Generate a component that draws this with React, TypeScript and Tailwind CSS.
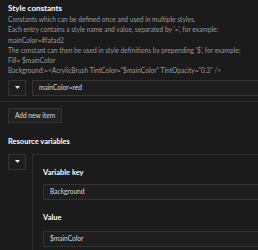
import React from 'react';

const Caret = () => (
  <svg width="5" height="3" viewBox="0 0 5 3" className="fill-gray-200">
    <path d="M0 0h5L2.5 3z" />
  </svg>
);

const ExpandBox = () => (
  <div className="flex h-[16px] w-[18px] shrink-0 items-center justify-center border border-[#333] bg-[#1e1e1e]">
    <Caret />
  </div>
);

export default function App() {
  const lines = [
    'Constants which can be defined once and used in multiple styles.',
    "Each entry contains a style name and value, separated by '=', for example:",
    'mainColor=#fafad2',
    "The constant can then be used in style definitions by prepending '$', for example:",
    'Fill= $mainColor',
    'Background:=<AcrylicBrush TintColor="$mainColor" TintOpacity="0.3" />',
  ];

  return (
    <div className="h-[250px] w-[258px] overflow-hidden bg-[#1b1b1b] font-['Lato',sans-serif] text-[6.6px]">
      {/* Style constants */}
      <div className="px-2 pt-[3px]">
        <h2 className="text-[8px] leading-[10px] font-bold text-white">Style constants</h2>
        <div className="mt-[1px] whitespace-nowrap text-[#9a9a9a] leading-[10.3px]">
          {lines.map((l) => (
            <p key={l}>{l}</p>
          ))}
        </div>
      </div>

      <div className="mt-[4px] flex gap-[6px] pl-2">
        <ExpandBox />
        <div className="flex h-[16px] flex-1 items-center border-y border-l border-[#333] bg-[#1e1e1e] pl-[6px] text-[#ddd]">
          mainColor=red
        </div>
      </div>
      <div className="mt-[5px] h-px bg-[#2e2e2e]" />

      <div className="px-2 pt-[6px]">
        <button className="h-[15px] w-[54px] border border-[#333] bg-[#222] text-[6.6px] leading-none text-[#ddd]">
          Add new item
        </button>
      </div>

      {/* Resource variables */}
      <h2 className="mt-[14px] px-2 text-[7.5px] leading-[10px] font-bold text-white">Resource variables</h2>

      <div className="mt-[7px] flex gap-[6px] pl-2">
        <ExpandBox />
        <div className="flex-1 border-t border-l border-[#2e2e2e] pb-4 pl-[10px] pt-[14px]">
          <div className="text-[7.5px] leading-none font-bold text-white">Variable key</div>
          <div className="mt-[8px] flex h-[16px] items-center border-y border-l border-[#333] bg-[#1e1e1e] pl-[6px] text-[#ddd]">
            Background
          </div>
          <div className="mt-[14px] text-[7.5px] leading-none font-bold text-white">Value</div>
          <div className="mt-[9px] flex h-[16px] items-center border-y border-l border-[#333] bg-[#1e1e1e] pl-[6px] text-[#ddd]">
            $mainColor
          </div>
        </div>
      </div>
    </div>
  );
}
